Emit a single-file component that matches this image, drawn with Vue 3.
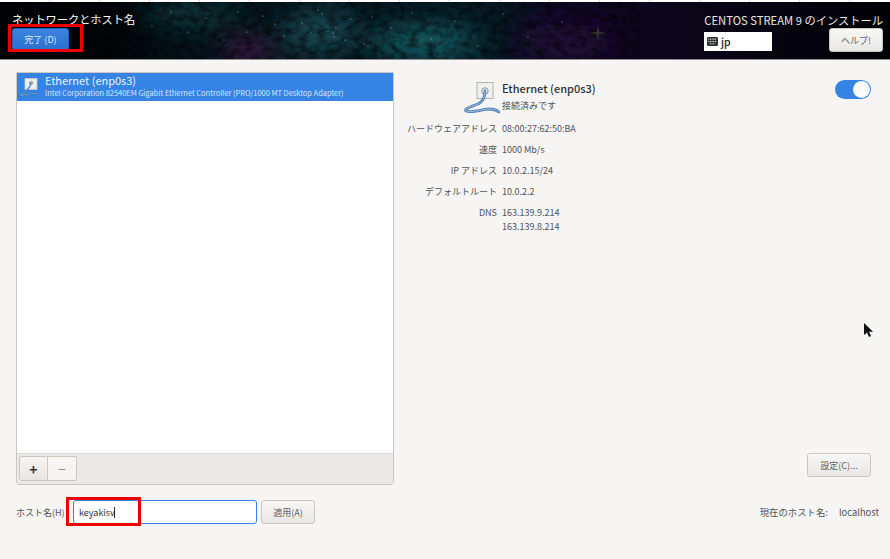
<script setup>
const details = [
  { label: 'ハードウェアアドレス', value: ['08:00:27:62:50:BA'] },
  { label: '速度', value: ['1000 Mb/s'] },
  { label: 'IP アドレス', value: ['10.0.2.15/24'] },
  { label: 'デフォルトルート', value: ['10.0.2.2'] },
  { label: 'DNS', value: ['163.139.9.214', '163.139.8.214'] }
]
const stars = [
  [128,12],[152,24],[171,10],[188,30],[206,16],[224,38],[247,30],[263,14],[284,34],
  [302,21],[311,31],[318,8],[328,29],[333,31],[334,35],[351,17],[364,42],[368,44],[372,15],[391,26],[412,11],
  [431,37],[455,19],[478,44],[503,12],[528,35],[562,20],[322,12],[336,26],[345,38],[275,22],[238,10]
]
</script>

<template>
  <div class="app">
    <div class="ruler"></div>
    <header class="top">
      <svg class="sky" viewBox="0 0 890 57" preserveAspectRatio="none" aria-hidden="true">
        <defs>
          <filter id="soft" x="-30%" y="-80%" width="160%" height="260%"><feGaussianBlur stdDeviation="13" /></filter>
          <filter id="noise" x="0" y="0" width="100%" height="100%">
            <feTurbulence type="fractalNoise" baseFrequency="0.11 0.15" numOctaves="4" seed="7" />
            <feColorMatrix type="matrix" values="0 0 0 0 0  0 0 0 0 0  0 0 0 0 0  2.2 0 0 0 -0.85" />
          </filter>
          <linearGradient id="base" x1="0" x2="1" y1="0" y2="0">
            <stop offset="0" stop-color="#010205" />
            <stop offset="0.13" stop-color="#020609" />
            <stop offset="0.22" stop-color="#05141b" />
            <stop offset="0.56" stop-color="#071a24" />
            <stop offset="0.63" stop-color="#100825" />
            <stop offset="0.8" stop-color="#090516" />
            <stop offset="1" stop-color="#010105" />
          </linearGradient>
        </defs>
        <rect width="890" height="57" fill="url(#base)" />
        <g filter="url(#soft)">
          <ellipse cx="190" cy="12" rx="50" ry="12" fill="#0e3a40" />
          <ellipse cx="320" cy="30" rx="40" ry="22" fill="#154652" />
          <ellipse cx="425" cy="40" rx="55" ry="16" fill="#146068" />
          <ellipse cx="248" cy="50" rx="24" ry="10" fill="#561358" />
          <ellipse cx="565" cy="40" rx="50" ry="18" fill="#200a38" />
        </g>
        <rect width="640" height="57" fill="#010508" filter="url(#noise)" opacity=".6" />
        <g fill="#d6e6e6" opacity=".7">
          <circle v-for="s in stars" :key="s[0] + '-' + s[1]" :cx="s[0]" :cy="s[1]" r=".6" />
        </g>
        <path d="M598 23 L599.2 29.8 L606 31 L599.2 32.2 L598 39 L596.8 32.2 L590 31 L596.8 29.8 Z" fill="#33322a" />
      </svg>
      <div class="top-left">
        <h1 class="title">ネットワークとホスト名</h1>
        <button class="done">完了 (D)</button>
      </div>
      <div class="top-right">
        <div class="product">CENTOS STREAM 9 のインストール</div>
        <div class="top-controls">
          <div class="kbd">
            <svg width="11" height="9" viewBox="0 0 11 9"><rect width="11" height="9" rx="1.2" fill="#2e3436" /><path d="M1.2 2.2h8.6M1.2 4.5h8.6M2.8 6.8h5.4" stroke="#fff" stroke-width=".9" stroke-dasharray="1 .7" /></svg>
            <span>jp</span>
          </div>
          <button class="help">ヘルプ!</button>
        </div>
      </div>
    </header>

    <main class="body">
      <section class="left">
        <div class="list">
          <div class="row">
            <svg class="row-icon" viewBox="0 0 26 24" width="26" height="24">
              <rect x="7" y="3.5" width="12" height="11" fill="#eeeeec" stroke="#c5cad0" stroke-width=".8" />
              <circle cx="13" cy="8" r="1.8" fill="#aab2b8" stroke="#6f7a82" stroke-width=".5" />
              <path d="M13 8 C12.5 13 8 16 2 20.5 C8 20 14 17.5 20 19" fill="none" stroke="#2f68ab" stroke-width="1.5" />
              <path d="M13 8 C12.5 13 8 16 2 20.5 C8 20 14 17.5 20 19" fill="none" stroke="#a9c6ea" stroke-width=".6" />
            </svg>
            <div class="row-text">
              <div class="row-name">Ethernet (enp0s3)</div>
              <div class="row-desc">Intel Corporation 82540EM Gigabit Ethernet Controller (PRO/1000 MT Desktop Adapter)</div>
            </div>
          </div>
        </div>
        <div class="toolbar">
          <div class="linked">
            <button class="tool add">+</button>
            <button class="tool sub">−</button>
          </div>
        </div>
      </section>

      <section class="right">
        <div class="device">
          <div class="device-main">
            <svg class="device-icon" viewBox="0 0 36 33" width="36" height="33">
              <rect x="13" y="1.5" width="16" height="16" fill="#f0f0ee" stroke="#b0b3b4" stroke-width="1" />
              <circle cx="21" cy="10" r="3.2" fill="#e8e8e6" stroke="#8f9599" stroke-width="1" />
              <path d="M21 10 C21 17 19 20 14 23 C8 25.5 2 27 1.5 29 C2 32 12 30 18 29 C24 27.5 30 27 35 31" fill="none" stroke="#4f7fb8" stroke-width="2.8" stroke-linecap="round" />
              <path d="M21 10 C21 17 19 20 14 23 C8 25.5 2 27 1.5 29 C2 32 12 30 18 29 C24 27.5 30 27 35 31" fill="none" stroke="#b4cde8" stroke-width=".8" stroke-linecap="round" />
            </svg>
            <div>
              <div class="device-name">Ethernet (enp0s3)</div>
              <div class="device-state">接続済みです</div>
            </div>
          </div>
          <div class="switch"><span class="knob"></span></div>
        </div>

        <dl class="details">
          <div v-for="d in details" :key="d.label" class="detail">
            <dt>{{ d.label }}</dt>
            <dd><div v-for="v in d.value" :key="v">{{ v }}</div></dd>
          </div>
        </dl>

        <div class="configure-wrap"><button class="btn configure">設定(C)...</button></div>
      </section>
    </main>

    <footer class="foot">
      <div class="host">
        <label>ホスト名(H)</label>
        <div class="input"><span>keyakisv</span><i class="caret"></i></div>
        <button class="btn apply">適用(A)</button>
      </div>
      <div class="current"><span>現在のホスト名:</span><span>localhost</span></div>
    </footer>

    <div class="mark mark-done"></div>
    <div class="mark mark-host"></div>
    <svg class="cursor" viewBox="0 0 10 15" width="10" height="15"><path d="M1 0v12l3-2.6 2 4.6 2-.9-2-4.4h4z" fill="#111" /></svg>
  </div>
</template>

<style scoped>
.app {
  position: relative;
  width: 890px;
  height: 559px;
  overflow: hidden;
  background: #f6f5f4;
  color: #2e3436;
  font-family: "Noto Sans CJK JP", "Noto Sans", sans-serif;
  font-size: 9px;
}
button { font-family: inherit; }
.ruler {
  height: 2px;
  background: repeating-linear-gradient(to right, #fff 0, #fff 49px, #d8d8d8 49px, #d8d8d8 50px);
}
.top {
  position: relative;
  height: 57px;
  border-bottom: 1px solid #8f9190;
  display: flex;
  justify-content: space-between;
}
.sky { position: absolute; inset: 0; width: 100%; height: 100%; }
.top-left, .top-right { position: relative; }
.top-left { padding: 9px 0 0 12px; }
.title { margin: 0; font-size: 11.2px; line-height: 16px; font-weight: 400; color: #fff; }
.done {
  display: block;
  margin-top: 1px;
  width: 57px;
  height: 23px;
  padding: 0;
  border: 1px solid #1b6acb;
  border-radius: 3px;
  background: linear-gradient(#3c84e0, #2a70d0);
  color: #dfe9f8;
  font-size: 9px;
}
.top-right { padding: 10px 7px 0 0; width: 186px; box-sizing: border-box; }
.product { color: #e8e8e6; font-size: 11.25px; line-height: 16px; text-align: right; white-space: nowrap; }
.top-controls { display: flex; justify-content: space-between; }
.kbd {
  width: 68px;
  height: 19px;
  margin-top: 4px;
  background: #fff;
  display: flex;
  align-items: center;
  gap: 3px;
  padding-left: 3px;
  box-sizing: border-box;
  color: #1c1f20;
  font-size: 10.5px;
  font-weight: 500;
}
.help {
  width: 54px;
  height: 24px;
  padding: 0;
  border: 1px solid #cdc7c2;
  border-radius: 3px;
  background: linear-gradient(#f8f7f6, #e9e7e5);
  color: #5d6365;
  font-size: 9px;
}
.body {
  display: flex;
  padding: 12px 19px 0 16px;
  height: 440px;
  box-sizing: border-box;
}
.left {
  width: 378px;
  height: 413px;
  border: 1px solid #cdc7c2;
  border-radius: 0 0 3px 3px;
  display: flex;
  flex-direction: column;
  box-sizing: border-box;
}
.list { flex: 1; background: #fff; border-bottom: 1px solid #dcd8d4; }
.row {
  height: 28px;
  background: #3584e4;
  color: #fff;
  display: flex;
  align-items: center;
  padding-left: 1px;
  gap: 1px;
}
.row-icon { flex: none; }
.row-text { margin-top: -2px; }
.row-name { font-size: 11px; line-height: 13px; color: #e8f1fc; }
.row-desc { margin-top: 1px; font-size: 7.43px; line-height: 10px; color: #d5e5f9; white-space: nowrap; }
.toolbar { height: 30px; background: #ebe8e5; padding: 2px 0 0 2px; box-sizing: border-box; }
.linked { display: inline-flex; }
.tool {
  width: 29px;
  height: 25px;
  padding: 0;
  border: 1px solid #cdc7c2;
  background: #f3f2f0;
  font-size: 14px;
  line-height: 1;
}
.add { border-radius: 3px 0 0 3px; color: #2e3436; font-weight: 700; background: linear-gradient(#f6f5f4, #e8e6e3); }
.sub { border-radius: 0 3px 3px 0; border-left: none; color: #8a8f91; background: #f6f5f4; }
.right { flex: 1; display: flex; flex-direction: column; min-width: 0; }
.device { display: flex; justify-content: space-between; padding: 9px 0 0 70px; height: 31px; }
.device-main { display: flex; gap: 2px; }
.device-icon { flex: none; }
.device-name { font-size: 11px; line-height: 15px; font-weight: 500; color: #2e3436; white-space: nowrap; }
.device-state { font-size: 9px; line-height: 14px; margin-top: 3px; color: #4e5456; }
.switch {
  width: 36px;
  height: 19px;
  border-radius: 10px;
  background: #3584e4;
  position: relative;
  margin-top: -1px;
}
.knob {
  position: absolute;
  right: 1px;
  top: 1px;
  width: 17px;
  height: 17px;
  border-radius: 50%;
  background: #fbfbfa;
}
.details { margin: 10px 0 0; padding: 0; }
.detail { display: grid; grid-template-columns: 103px 1fr; column-gap: 5px; margin-bottom: 7px; line-height: 14px; }
dt { text-align: right; white-space: nowrap; color: #4e5456; font-size: 9px; }
dd { margin: 0; color: #4e5456; font-size: 9px; }
.configure-wrap { margin-top: auto; display: flex; justify-content: flex-end; padding-bottom: 23px; }
.btn {
  height: 24px;
  padding: 0;
  border: 1px solid #cdc7c2;
  border-radius: 3px;
  background: linear-gradient(#f8f7f6, #e9e7e5);
  color: #5d6365;
  font-size: 9px;
}
.configure { width: 64px; }
.foot {
  display: flex;
  justify-content: space-between;
  align-items: center;
  padding: 0 11px 0 16px;
  height: 24px;
}
.host { display: flex; align-items: center; }
.host label { width: 57px; white-space: nowrap; color: #4e5456; }
.input {
  width: 184px;
  height: 24px;
  box-sizing: border-box;
  background: #fff;
  border: 1px solid #3584e4;
  border-radius: 3px;
  display: flex;
  align-items: center;
  padding-left: 5px;
  font-size: 9px;
}
.caret { width: 1px; height: 11px; background: #2e3436; margin-left: -1px; }
.apply { width: 54px; margin-left: 4px; }
.current { display: flex; gap: 11px; color: #4e5456; font-size: 9.4px; }
.mark { position: absolute; border: 3px solid #ee0000; box-sizing: border-box; }
.mark-done { left: 8px; top: 24px; width: 75px; height: 28px; }
.mark-host { left: 66px; top: 497px; width: 75px; height: 29px; }
.cursor { position: absolute; left: 863px; top: 323px; }
</style>
